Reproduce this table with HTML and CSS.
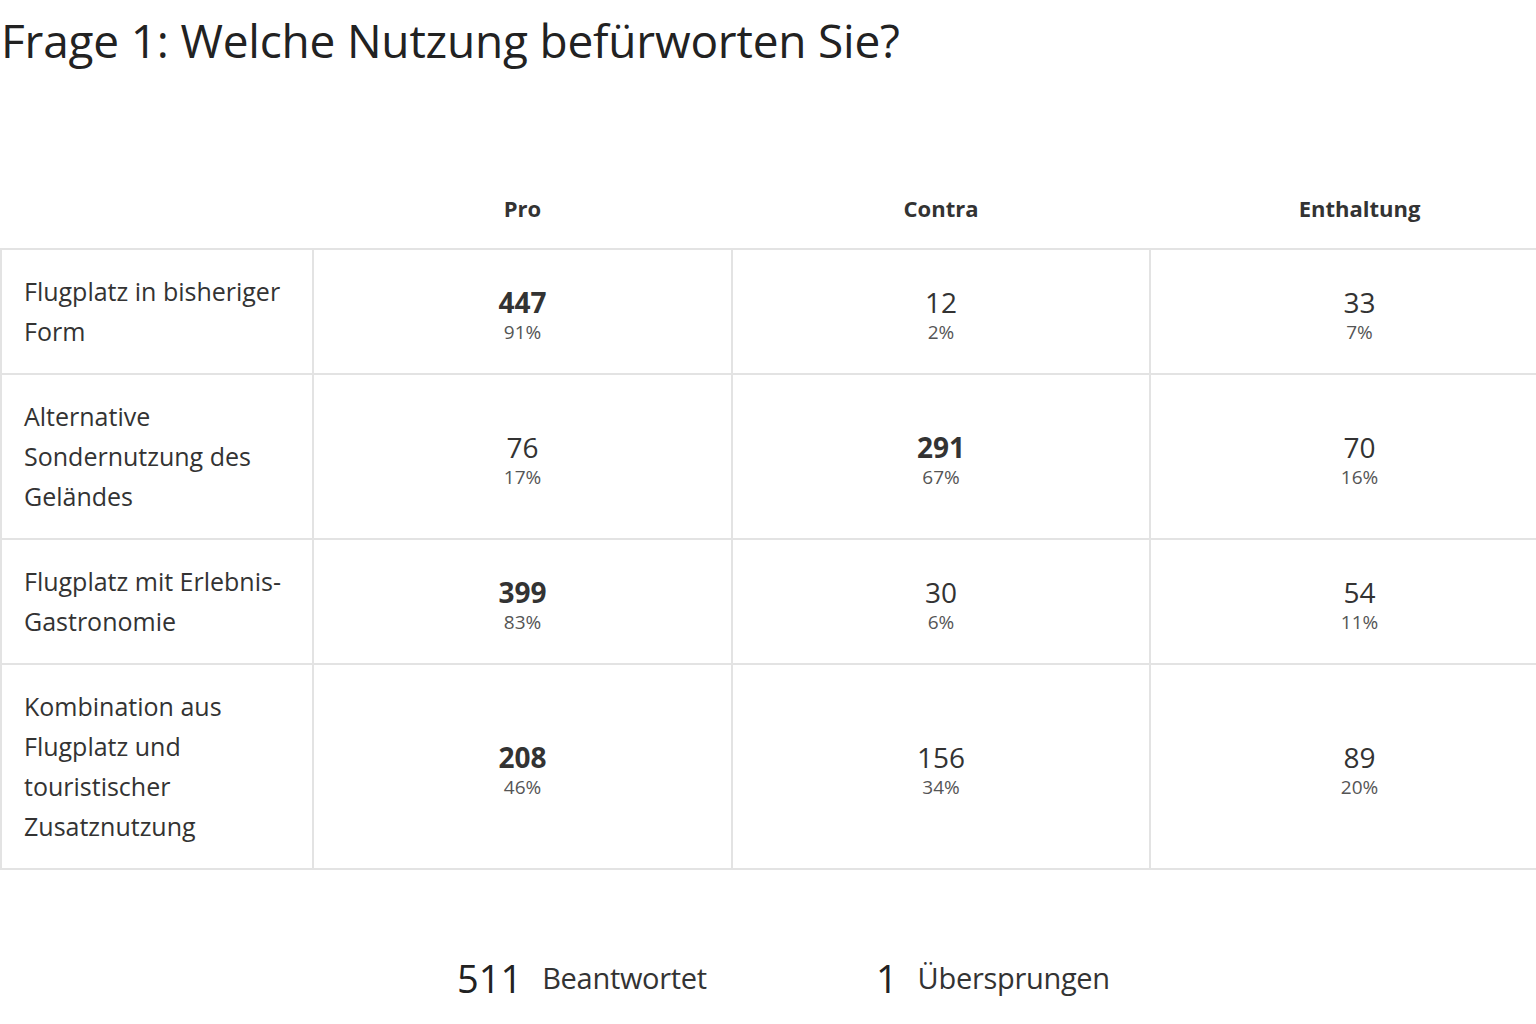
FILE: index.html
```html
<!DOCTYPE html>
<html lang="de">
<head>
<meta charset="utf-8">
<title>Frage 1</title>
<link rel="stylesheet" href="styles.css">
</head>
<body>
<h1 class="title">Frage 1: Welche Nutzung befürworten Sie?</h1>
<table class="matrix">
  <colgroup>
    <col class="c-label">
    <col class="c-val">
    <col class="c-val2">
    <col class="c-val">
  </colgroup>
  <thead>
    <tr>
      <th></th>
      <th>Pro</th>
      <th>Contra</th>
      <th>Enthaltung</th>
    </tr>
  </thead>
  <tbody>
    <tr>
      <td class="label">Flugplatz in bisheriger Form</td>
      <td><div class="num top">447</div><div class="pct">91%</div></td>
      <td><div class="num">12</div><div class="pct">2%</div></td>
      <td><div class="num">33</div><div class="pct">7%</div></td>
    </tr>
    <tr>
      <td class="label">Alternative Sondernutzung des Geländes</td>
      <td><div class="num">76</div><div class="pct">17%</div></td>
      <td><div class="num top">291</div><div class="pct">67%</div></td>
      <td><div class="num">70</div><div class="pct">16%</div></td>
    </tr>
    <tr>
      <td class="label">Flugplatz mit Erlebnis-Gastronomie</td>
      <td><div class="num top">399</div><div class="pct">83%</div></td>
      <td><div class="num">30</div><div class="pct">6%</div></td>
      <td><div class="num">54</div><div class="pct">11%</div></td>
    </tr>
    <tr>
      <td class="label">Kombination aus Flugplatz und touristischer Zusatznutzung</td>
      <td><div class="num top">208</div><div class="pct">46%</div></td>
      <td><div class="num">156</div><div class="pct">34%</div></td>
      <td><div class="num">89</div><div class="pct">20%</div></td>
    </tr>
  </tbody>
</table>
<div class="summary">
  <div class="stat"><span class="stat-num">511</span><span class="stat-label">Beantwortet</span></div>
  <div class="stat"><span class="stat-num">1</span><span class="stat-label">Übersprungen</span></div>
</div>
</body>
</html>
```
FILE: styles.css
```css
html, body {
  margin: 0;
  padding: 0;
  background: #ffffff;
  overflow: hidden;
}
body {
  font-family: "Open Sans", "Noto Sans", sans-serif;
  color: #333333;
  width: 1536px;
  height: 1024px;
}
.title {
  margin: 0;
  padding: 8px 0 0 1px;
  font-size: 46px;
  font-weight: 400;
  line-height: 64px;
  color: #222222;
  letter-spacing: -0.2px;
}
.matrix {
  margin-top: 96px;
  border-collapse: collapse;
  table-layout: fixed;
  width: 1568px;
}
.c-label { width: 312px; }
.c-val { width: 419px; }
.c-val2 { width: 418px; }
.matrix th {
  height: 80px;
  font-size: 22px;
  font-weight: 700;
  color: #333333;
  text-align: center;
  vertical-align: middle;
  padding: 0;
}
.matrix td {
  border: 2px solid #e3e3e3;
  text-align: center;
  vertical-align: middle;
  padding: 0;
}
.matrix td.label {
  text-align: left;
  padding: 21px 20px 22px 22px;
  font-size: 25px;
  line-height: 40px;
  color: #333333;
  letter-spacing: 0;
}
.num {
  font-size: 28px;
  line-height: 40px;
  color: #333333;
}
.num.top { font-weight: 700; }
.pct {
  font-size: 19px;
  line-height: 20px;
  color: #555555;
}
.summary {
  display: flex;
  gap: 169px;
  padding: 83px 0 0 457px;
}
.stat {
  display: flex;
  align-items: center;
  gap: 20px;
}
.stat-num {
  font-size: 38px;
  line-height: 50px;
  color: #222222;
}
.stat-label {
  font-size: 29px;
  line-height: 50px;
  color: #333333;
  letter-spacing: -0.3px;
}
```
